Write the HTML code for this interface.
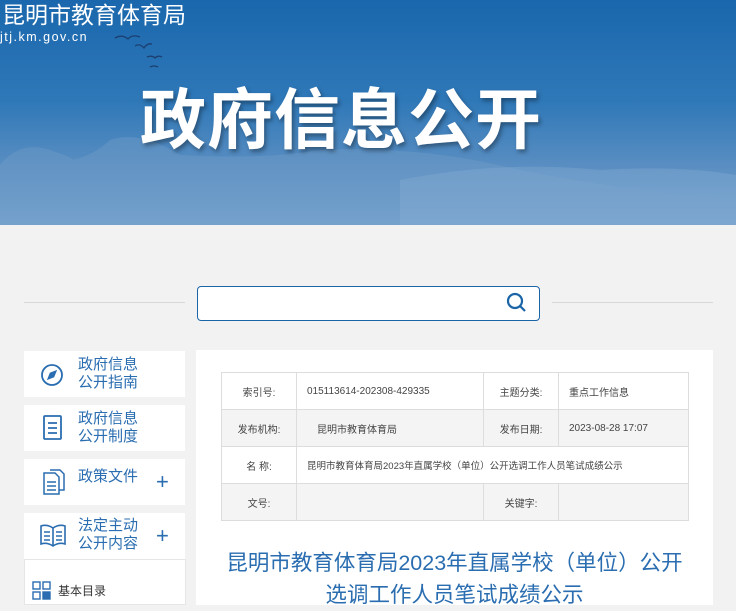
<!DOCTYPE html>
<html><head><meta charset="utf-8"><style>
*{margin:0;padding:0;box-sizing:border-box}
body{width:736px;height:605px;overflow:hidden;background:#f2f2f2;font-family:"Liberation Sans","Noto Sans CJK SC",sans-serif;position:relative}
.banner{position:absolute;left:0;top:0;width:736px;height:225px;background:linear-gradient(180deg,#1a67ad 0%,#2f78b8 45%,#5b8fc2 75%,#7aa6d0 100%);overflow:hidden}
.abs{position:absolute}
.side{position:absolute;left:24px;width:161px;height:46px;background:#fff}
.side .t{position:absolute;left:54px;color:#2a6db0;font-size:15px;line-height:18px}
.side .plus{position:absolute;left:132px;top:13px;color:#2a6db0;font-size:22px;line-height:20px}
table{position:absolute;left:221px;top:372px;border-collapse:collapse;font-size:10px;color:#444}
td{border:1px solid #ddd;height:37px;padding:0}
tr:nth-child(even) td{background:#f4f4f4}
</style></head><body>
<div class="banner">
<svg class="abs" style="left:0;top:120px" width="736" height="105"><path d="M0 45 Q20 20 50 30 T70 40 Q90 38 110 20 Q140 10 180 35 Q260 40 320 30 Q420 25 520 50 Q620 70 736 80 L736 105 L0 105Z" fill="#6f9cc8" opacity=".45"/><path d="M400 60 Q500 40 600 50 Q680 45 736 55 L736 105 L400 105Z" fill="#8fb3d6" opacity=".3"/></svg>
<div class="abs" style="left:2px;top:0px;color:#fff;font-size:23px;line-height:30px">昆明市教育体育局</div>
<div class="abs" style="left:0;top:30px;color:#fff;font-size:12.5px;letter-spacing:1.5px">jtj.km.gov.cn</div>
<svg class="abs" style="left:110px;top:33px" width="60" height="40" stroke="#1c3f70" fill="none" stroke-width="1.3"><path d="M5 5 Q12 1 18 6 Q22 1 30 4"/><path d="M25 13 Q30 10 34 15 Q37 10 42 11"/><path d="M37 24 Q42 22 45 25 Q48 22 52 24"/><path d="M40 34 Q44 32 48 34"/></svg>
<div class="abs" style="left:140px;top:80px;color:#fff;font-size:66px;font-weight:bold;line-height:80px;text-shadow:2px 3px 4px rgba(0,0,0,.35);letter-spacing:1px">政府信息公开</div>
</div>
<div class="abs" style="left:24px;top:302px;width:161px;height:1px;background:#d8d8d8"></div>
<div class="abs" style="left:552px;top:302px;width:161px;height:1px;background:#d8d8d8"></div>
<div class="abs" style="left:197px;top:286px;width:343px;height:35px;background:#fff;border:1px solid #1a64a8;border-radius:4px"></div>
<svg class="abs" style="left:505px;top:291px" width="24" height="24" fill="none" stroke="#1a64a8" stroke-width="2.2"><circle cx="10" cy="10" r="7"/><path d="M15 15l5 5"/></svg>

<div class="side" style="top:351px"><svg class="abs" style="left:16px;top:12px" width="24" height="24" fill="none" stroke="#2a6db0" stroke-width="1.8"><circle cx="12" cy="12" r="10"/><path d="M15.5 8.5L10.5 10.5 8.5 15.5 13.5 13.5Z" fill="#2a6db0"/></svg><div class="t" style="top:5px">政府信息<br>公开指南</div></div>
<div class="side" style="top:405px"><svg class="abs" style="left:18px;top:9px" width="22" height="28" fill="none" stroke="#2a6db0" stroke-width="1.8"><rect x="2" y="2" width="17" height="23" rx="1"/><path d="M6 9h9M6 14h9M6 19h9"/></svg><div class="t" style="top:5px">政府信息<br>公开制度</div></div>
<div class="side" style="top:459px"><svg class="abs" style="left:17px;top:9px" width="26" height="28" fill="none" stroke="#2a6db0" stroke-width="1.5"><path d="M3 5h11l4 4v17H3Z"/><path d="M9 2h10l4 4v16h-5"/><path d="M6 14h9M6 18h9M6 22h9"/></svg><div class="t" style="top:9px">政策文件</div><div class="plus">+</div></div>
<div class="side" style="top:513px"><svg class="abs" style="left:15px;top:9px" width="28" height="26" fill="none" stroke="#2a6db0" stroke-width="1.6"><path d="M2 4q6-2 12 2q6-4 12-2v18q-6-2-12 2q-6-4-12-2Z"/><path d="M14 6v18M5 10h6M5 14h6M5 18h6M17 10h6M17 14h6M17 18h6"/></svg><div class="t" style="top:4px">法定主动<br>公开内容</div><div class="plus">+</div></div>
<div class="abs" style="left:24px;top:559px;width:162px;height:46px;background:#fff;border:1px solid #e6e6e6"></div>
<svg class="abs" style="left:32px;top:581px" width="20" height="20" fill="none" stroke="#2a6db0" stroke-width="1.4"><rect x="1" y="1" width="7" height="7"/><rect x="11" y="1" width="7" height="7"/><rect x="1" y="11" width="7" height="7"/><rect x="11" y="11" width="7" height="7" fill="#2a6db0"/></svg>
<div class="abs" style="left:58px;top:582px;font-size:12px;color:#333">基本目录</div>

<div class="abs" style="left:196px;top:350px;width:517px;height:255px;background:#fff"></div>
<table>
<tr><td style="width:75px;text-align:center">索引号:</td><td style="width:187px;padding-left:10px">015113614-202308-429335</td><td style="width:75px;text-align:center">主题分类:</td><td style="width:130px;padding-left:10px">重点工作信息</td></tr>
<tr><td style="text-align:center">发布机构:</td><td style="padding-left:20px">昆明市教育体育局</td><td style="text-align:center">发布日期:</td><td style="padding-left:10px">2023-08-28 17:07</td></tr>
<tr><td style="text-align:center">名 称:</td><td colspan="3" style="padding-left:10px;font-size:9.5px">昆明市教育体育局2023年直属学校（单位）公开选调工作人员笔试成绩公示</td></tr>
<tr><td style="text-align:center">文号:</td><td></td><td style="text-align:center">关键字:</td><td></td></tr>
</table>
<div class="abs" style="left:196px;top:547px;width:517px;text-align:center;color:#2a6db0;font-size:21.5px;line-height:32px;white-space:nowrap">昆明市教育体育局2023年直属学校（单位）公开<br>选调工作人员笔试成绩公示</div>
</body></html>
